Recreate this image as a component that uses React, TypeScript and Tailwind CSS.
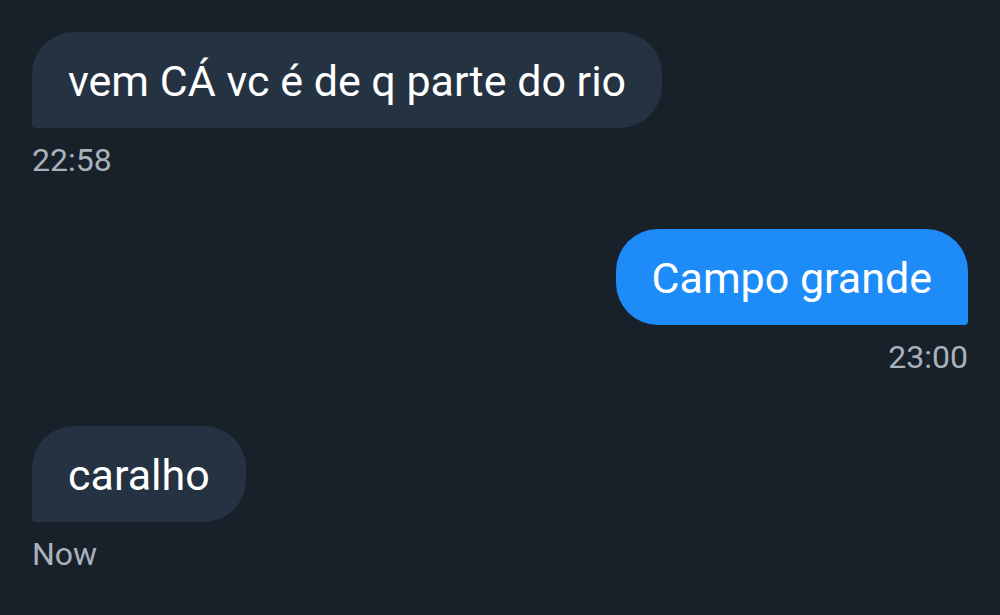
export default function App() {
  const messages = [
    { text: "vem CÁ vc é de q parte do rio", time: "22:58", mine: false },
    { text: "Campo grande", time: "23:00", mine: true },
    { text: "caralho", time: "Now", mine: false },
  ];

  return (
    <div
      className="h-[615px] w-[1000px] overflow-hidden bg-[#18202a] px-8 pt-8"
      style={{ fontFamily: "Roboto, 'Noto Sans', sans-serif" }}
    >
      <div className="flex flex-col gap-[51px]">
        {messages.map((m) => (
          <div key={m.time} className={`flex flex-col ${m.mine ? "items-end" : "items-start"}`}>
            <div
              className={
                m.mine
                  ? "h-24 rounded-[42px] rounded-br-[4px] bg-[#1d8cf8] pl-[36px] pr-[36px] pt-[3px] text-[43px] leading-[93px] text-white"
                  : "h-24 rounded-[42px] rounded-bl-[4px] bg-[#243241] px-9 pt-[3px] text-[43px] leading-[93px] text-white"
              }
            >
              {m.text}
            </div>
            <div className="mt-[14px] text-[32px] leading-9 text-[#a8b2bc]">{m.time}</div>
          </div>
        ))}
      </div>
    </div>
  );
}
